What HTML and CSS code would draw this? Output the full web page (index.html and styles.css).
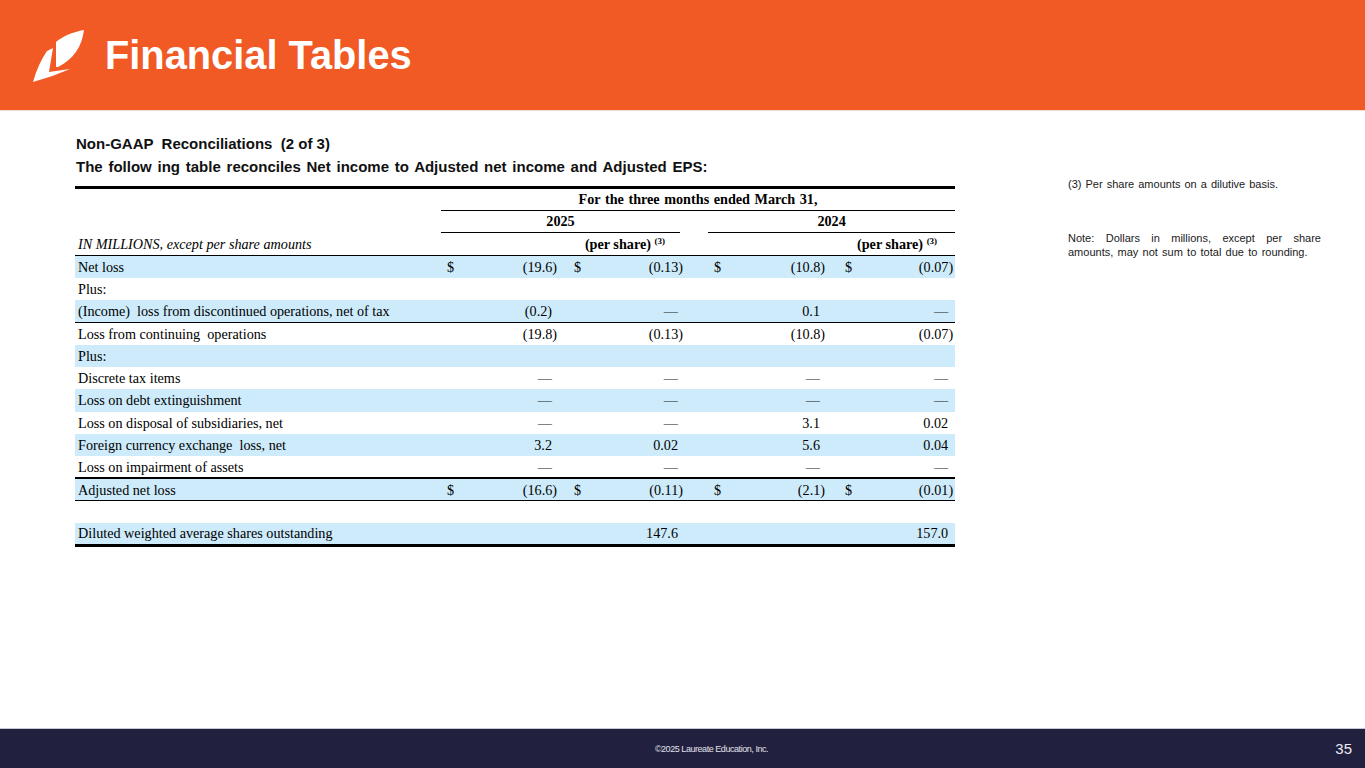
FILE: index.html
```html
<!DOCTYPE html>
<html lang="en">
<head>
<meta charset="utf-8">
<title>Financial Tables</title>
<link rel="stylesheet" href="styles.css">
</head>
<body>
<div class="slide">
  <header class="banner">
    <svg class="logo" viewBox="28 24 60 60" width="60" height="60" aria-hidden="true">
      <path d="M56 41 C63 35 73 31 84 29 C82 45 74 58 58 66 L56 66 Z" fill="#fff"/>
      <path d="M47 50 L53 47 L49 71 L70 68 Q52 76 33 81 Q38 63 47 50 Z" fill="#fff"/>
    </svg>
    <h1 class="title">Financial Tables</h1>
  </header>

  <main class="content">
    <section class="left">
      <h2 class="subtitle">Non-GAAP  Reconciliations  (2 of 3)</h2>
      <h3 class="lead">The follow ing table reconciles Net income to Adjusted net income and Adjusted EPS:</h3>

      <table class="recon">
        <colgroup>
          <col class="c-label"><col class="c-d1"><col class="c-v1"><col class="c-d2"><col class="c-v2">
          <col class="c-gap"><col class="c-d3"><col class="c-v3"><col class="c-d4"><col class="c-v4">
        </colgroup>
        <thead>
          <tr class="h-period">
            <th></th>
            <th colspan="9" class="period">For the three months ended March 31,</th>
          </tr>
          <tr class="h-year">
            <th></th>
            <th colspan="4"><div class="yr yr-a">2025</div></th>
            <th></th>
            <th colspan="4"><div class="yr">2024</div></th>
          </tr>
          <tr class="h-units">
            <th class="units">IN MILLIONS, except per share amounts</th>
            <th colspan="2"></th>
            <th colspan="2" class="ps ps-a">(per share) <sup>(3)</sup></th>
            <th></th>
            <th colspan="2"></th>
            <th colspan="2" class="ps ps-b">(per share) <sup>(3)</sup></th>
          </tr>
        </thead>
        <tbody>
          <tr class="blue">
            <td class="lbl">Net loss</td>
            <td class="d d1">$</td><td class="v v1">(19.6)</td>
            <td class="d d2">$</td><td class="v v2">(0.13)</td>
            <td></td>
            <td class="d d3">$</td><td class="v v3">(10.8)</td>
            <td class="d d4">$</td><td class="v v4">(0.07)</td>
          </tr>
          <tr>
            <td class="lbl">Plus:</td>
            <td></td><td></td><td></td><td></td><td></td><td></td><td></td><td></td><td></td>
          </tr>
          <tr class="blue rule-b">
            <td class="lbl">(Income)  loss from discontinued operations, net of tax</td>
            <td></td><td class="v v1 pos">(0.2)</td>
            <td></td><td class="v v2 pos dash">—</td>
            <td></td>
            <td></td><td class="v v3 pos">0.1</td>
            <td></td><td class="v v4 pos dash">—</td>
          </tr>
          <tr>
            <td class="lbl">Loss from continuing  operations</td>
            <td></td><td class="v v1">(19.8)</td>
            <td></td><td class="v v2">(0.13)</td>
            <td></td>
            <td></td><td class="v v3">(10.8)</td>
            <td></td><td class="v v4">(0.07)</td>
          </tr>
          <tr class="blue">
            <td class="lbl">Plus:</td>
            <td></td><td></td><td></td><td></td><td></td><td></td><td></td><td></td><td></td>
          </tr>
          <tr>
            <td class="lbl">Discrete tax items</td>
            <td></td><td class="v v1 pos dash">—</td>
            <td></td><td class="v v2 pos dash">—</td>
            <td></td>
            <td></td><td class="v v3 pos dash">—</td>
            <td></td><td class="v v4 pos dash">—</td>
          </tr>
          <tr class="blue">
            <td class="lbl">Loss on debt extinguishment</td>
            <td></td><td class="v v1 pos dash">—</td>
            <td></td><td class="v v2 pos dash">—</td>
            <td></td>
            <td></td><td class="v v3 pos dash">—</td>
            <td></td><td class="v v4 pos dash">—</td>
          </tr>
          <tr>
            <td class="lbl">Loss on disposal of subsidiaries, net</td>
            <td></td><td class="v v1 pos dash">—</td>
            <td></td><td class="v v2 pos dash">—</td>
            <td></td>
            <td></td><td class="v v3 pos">3.1</td>
            <td></td><td class="v v4 pos">0.02</td>
          </tr>
          <tr class="blue">
            <td class="lbl">Foreign currency exchange  loss, net</td>
            <td></td><td class="v v1 pos">3.2</td>
            <td></td><td class="v v2 pos">0.02</td>
            <td></td>
            <td></td><td class="v v3 pos">5.6</td>
            <td></td><td class="v v4 pos">0.04</td>
          </tr>
          <tr class="rule-m">
            <td class="lbl">Loss on impairment of assets</td>
            <td></td><td class="v v1 pos dash">—</td>
            <td></td><td class="v v2 pos dash">—</td>
            <td></td>
            <td></td><td class="v v3 pos dash">—</td>
            <td></td><td class="v v4 pos dash">—</td>
          </tr>
          <tr class="blue rule-b">
            <td class="lbl">Adjusted net loss</td>
            <td class="d d1">$</td><td class="v v1">(16.6)</td>
            <td class="d d2">$</td><td class="v v2">(0.11)</td>
            <td></td>
            <td class="d d3">$</td><td class="v v3">(2.1)</td>
            <td class="d d4">$</td><td class="v v4">(0.01)</td>
          </tr>
          <tr>
            <td class="lbl"></td>
            <td></td><td></td><td></td><td></td><td></td><td></td><td></td><td></td><td></td>
          </tr>
          <tr class="blue rule-end">
            <td class="lbl">Diluted weighted average shares outstanding</td>
            <td></td><td></td>
            <td></td><td class="v v2 pos">147.6</td>
            <td></td>
            <td></td><td></td>
            <td></td><td class="v v4 pos">157.0</td>
          </tr>
        </tbody>
      </table>
    </section>

    <aside class="notes">
      <p class="fn">(3) Per share amounts on a dilutive basis.</p>
      <p class="note">Note:  Dollars in millions, except per share amounts, may not sum to total due to rounding.</p>
    </aside>
  </main>

  <footer class="foot">
    <span class="copy">©2025 Laureate Education, Inc.</span>
    <span class="page">35</span>
  </footer>
</div>
</body>
</html>
```

FILE: styles.css
```css
* { box-sizing: border-box; }

html, body {
  margin: 0;
  padding: 0;
  background: #ffffff;
}

.slide {
  width: 1365px;
  height: 768px;
  display: flex;
  flex-direction: column;
  overflow: hidden;
  font-family: "Liberation Sans", Arial, sans-serif;
  color: #000;
}

/* ---------- banner ---------- */
.banner {
  height: 111px;
  flex: 0 0 111px;
  background: #f15a25;
  border-bottom: 1px solid #f3d9cf;
  display: flex;
  align-items: center;
  padding-left: 28px;
}

.logo {
  display: block;
  margin-top: 0;
}

.title {
  margin: 1px 0 0 17px;
  font-size: 39.8px;
  font-weight: 700;
  color: #ffffff;
  line-height: 1;
}

/* ---------- content ---------- */
.content {
  flex: 1 1 auto;
  display: flex;
  padding-top: 24px;
}

.left {
  margin-left: 75px;
  width: 880px;
}

.subtitle {
  margin: 0 0 5px 1px;
  font-size: 15px;
  line-height: 18px;
  font-weight: 700;
  color: #111;
  white-space: pre;
}

.lead {
  margin: 0 0 10px 1px;
  font-size: 15px;
  line-height: 18px;
  font-weight: 700;
  color: #111;
  word-spacing: 1.6px;
}

/* ---------- table ---------- */
.recon {
  width: 880px;
  table-layout: fixed;
  border-collapse: collapse;
  font-family: "Liberation Serif", "Times New Roman", serif;
  font-size: 14.2px;
  color: #000;
  border-top: 3px solid #000;
}

.c-label { width: 366px; }
.c-d1 { width: 29px; }
.c-v1 { width: 91px; }
.c-d2 { width: 39px; }
.c-v2 { width: 87px; }
.c-gap { width: 21px; }
.c-d3 { width: 32px; }
.c-v3 { width: 89px; }
.c-d4 { width: 41px; }
.c-v4 { width: 85px; }

.recon th {
  padding: 0;
  font-weight: 700;
  white-space: nowrap;
}

.recon .h-period th { height: 22.5px; }
.recon .h-period .period {
  text-align: center;
  border-bottom: 1px solid #000;
  word-spacing: 1px;
}

.recon .h-year th { height: 22.5px; vertical-align: top; }
.yr {
  height: 22.5px;
  line-height: 21px;
  text-align: center;
  border-bottom: 1px solid #000;
}
.yr-a { margin-right: 7px; }

.recon .h-units th {
  height: 22.5px;
  border-bottom: 1.5px solid #000;
}
.recon .h-units .units {
  text-align: left;
  font-weight: 400;
  font-style: italic;
  padding-left: 3px;
}
.recon th.ps { text-align: right; }
.recon th.ps-a { padding-right: 22px; }
.recon th.ps-b { padding-right: 18px; }
.ps sup {
  font-size: 9px;
  vertical-align: 5px;
  line-height: 0;
}

.recon td {
  height: 22.3px;
  padding: 0;
  white-space: nowrap;
  line-height: 20px;
}

.recon tr.blue td { background: #cdebfa; }

.recon td.lbl {
  padding-left: 3px;
  white-space: pre;
}

.recon td.d { text-align: left; }
.recon td.d1 { padding-left: 6px; }
.recon td.d2 { padding-left: 13px; }
.recon td.d3 { padding-left: 6px; }
.recon td.d4 { padding-left: 16px; }

.recon td.v { text-align: right; }
.recon td.v1, .recon td.v2, .recon td.v3 { padding-right: 4px; }
.recon td.v4 { padding-right: 2px; }
.recon td.v1.pos, .recon td.v2.pos, .recon td.v3.pos { padding-right: 9px; }
.recon td.v4.pos { padding-right: 7px; }

.recon td.dash { color: #222; }

.recon tr.rule-b td { border-bottom: 1.5px solid #000; }
.recon tr.rule-m td { border-bottom: 2px solid #000; }
.recon tr.rule-end td { border-bottom: 3px solid #000; }

/* ---------- notes ---------- */
.notes {
  margin-left: 113px;
  width: 253px;
  padding-top: 42px;
  font-size: 11px;
  line-height: 14px;
  color: #1a1a1a;
}

.fn {
  margin: 0;
  word-spacing: 1px;
}

.note {
  margin: 40px 0 0 0;
  text-align: justify;
  word-spacing: 1.2px;
}

/* ---------- footer ---------- */
.foot {
  flex: 0 0 40px;
  height: 40px;
  background: #21203f;
  border-top: 1px solid #c9c9d6;
  display: flex;
  align-items: center;
  position: relative;
}

.copy {
  position: absolute;
  left: 0;
  right: 0;
  text-align: center;
  padding-left: 58px;
  font-family: "Liberation Sans Narrow", "Liberation Sans", Arial, sans-serif;
  font-size: 9px;
  color: #e2e2ea;
  letter-spacing: -0.45px;
}

.page {
  margin-left: auto;
  margin-right: 13px;
  font-size: 15px;
  color: #ececf2;
}
```
